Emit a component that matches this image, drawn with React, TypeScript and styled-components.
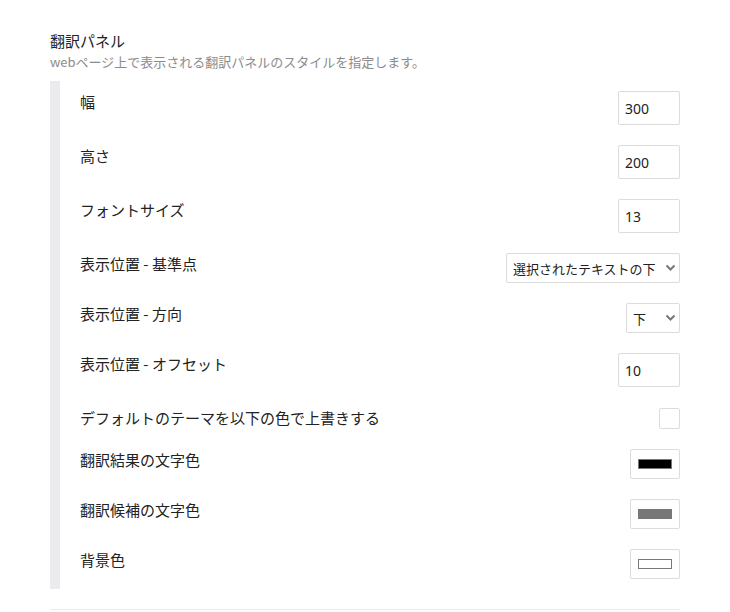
import React from "react";
import styled, { createGlobalStyle } from "styled-components";

const GlobalStyle = createGlobalStyle`
  html, body { margin: 0; padding: 0; background: #fff; }
  body {
    font-family: "Noto Sans CJK JP", "Noto Sans", "Liberation Sans", sans-serif;
    color: #222;
  }
`;

const Page = styled.div`
  width: 630px;
  padding: 30px 0 0 50px;
`;

const Title = styled.h2`
  margin: 0;
  font-size: 15px;
  font-weight: 400;
  line-height: 22px;
  color: #222;
`;

const Description = styled.p`
  margin: 0 0 9px;
  font-size: 13px;
  line-height: 20px;
  color: #8c8c8c;
`;

const List = styled.div`
  border-left: 10px solid #ebebee;
  padding-left: 20px;
  display: flex;
  flex-direction: column;
`;

const Row = styled.div`
  display: flex;
  justify-content: space-between;
  align-items: flex-start;
  padding: 10px 0;
`;

const Label = styled.span`
  font-size: 15px;
  line-height: 22px;
  color: #222;
`;

const TextInput = styled.input`
  box-sizing: border-box;
  width: 62px;
  height: 34px;
  border: 1px solid #dcdcdc;
  border-radius: 2px;
  padding: 0 6px;
  font-family: "Noto Sans", "Liberation Sans", sans-serif;
  font-size: 14px;
  color: #222;
  outline: none;
`;

const SelectWrap = styled.div<{ $w: number }>`
  position: relative;
  width: ${(p) => p.$w}px;
  height: 30px;
`;

const Select = styled.select`
  box-sizing: border-box;
  width: 100%;
  height: 30px;
  appearance: none;
  -webkit-appearance: none;
  border: 1px solid #dcdcdc;
  border-radius: 2px;
  background: #fff;
  padding: 0 20px 0 6px;
  font-family: "Noto Sans CJK JP", sans-serif;
  font-size: 13px;
  color: #222;
  outline: none;
`;

const Chevron = styled.svg`
  position: absolute;
  right: 4px;
  top: 11px;
  pointer-events: none;
`;

const Checkbox = styled.input`
  appearance: none;
  -webkit-appearance: none;
  box-sizing: border-box;
  width: 21px;
  height: 21px;
  margin: 1px 0 0;
  border: 1px solid #dcdcdc;
  border-radius: 2px;
  background: #fff;
`;

const ColorButton = styled.button`
  box-sizing: border-box;
  width: 50px;
  height: 30px;
  padding: 0;
  border: 1px solid #dcdcdc;
  border-radius: 2px;
  background: #fff;
  display: flex;
  align-items: center;
  justify-content: center;
`;

const Swatch = styled.span<{ $color: string }>`
  box-sizing: border-box;
  display: block;
  width: 34px;
  height: 10px;
  border: 1px solid #777;
  background: ${(p) => p.$color};
`;

const Divider = styled.hr`
  margin: 20px 0 0;
  border: none;
  border-top: 1px solid #ececec;
  height: 0;
`;

const ChevronIcon = () => (
  <Chevron width="11" height="8" viewBox="0 0 11 8">
    <path d="M1.5 1.5 L5.5 5.5 L9.5 1.5" fill="none" stroke="#777" strokeWidth="2" />
  </Chevron>
);

const numberRows = [
  { label: "幅", value: "300" },
  { label: "高さ", value: "200" },
  { label: "フォントサイズ", value: "13" },
];

const colorRows = [
  { label: "翻訳結果の文字色", color: "#000000" },
  { label: "翻訳候補の文字色", color: "#777777" },
  { label: "背景色", color: "#ffffff" },
];

export default function App() {
  return (
    <>
      <GlobalStyle />
      <Page>
        <Title>翻訳パネル</Title>
        <Description>webページ上で表示される翻訳パネルのスタイルを指定します。</Description>
        <List>
          {numberRows.map((r) => (
            <Row key={r.label}>
              <Label>{r.label}</Label>
              <TextInput type="text" defaultValue={r.value} />
            </Row>
          ))}
          <Row>
            <Label>表示位置 - 基準点</Label>
            <SelectWrap $w={174}>
              <Select defaultValue="selected">
                <option value="selected">選択されたテキストの下</option>
              </Select>
              <ChevronIcon />
            </SelectWrap>
          </Row>
          <Row>
            <Label>表示位置 - 方向</Label>
            <SelectWrap $w={54}>
              <Select defaultValue="bottom">
                <option value="bottom">下</option>
              </Select>
              <ChevronIcon />
            </SelectWrap>
          </Row>
          <Row>
            <Label>表示位置 - オフセット</Label>
            <TextInput type="text" defaultValue="10" />
          </Row>
          <Row>
            <Label>デフォルトのテーマを以下の色で上書きする</Label>
            <Checkbox type="checkbox" />
          </Row>
          {colorRows.map((r) => (
            <Row key={r.label}>
              <Label>{r.label}</Label>
              <ColorButton type="button">
                <Swatch $color={r.color} />
              </ColorButton>
            </Row>
          ))}
        </List>
        <Divider />
      </Page>
    </>
  );
}
